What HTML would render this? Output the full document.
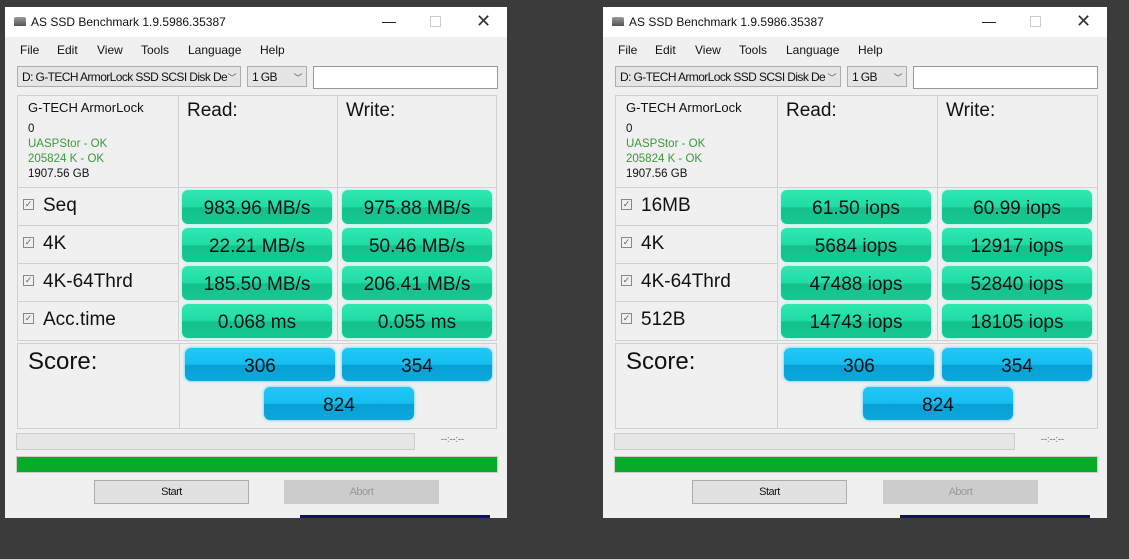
<!DOCTYPE html><html><head><style>
*{margin:0;padding:0;box-sizing:border-box}
body{width:1129px;height:559px;background:#3b3b3b;position:relative;overflow:hidden;font-family:"Liberation Sans",sans-serif;color:#111}
.w{position:absolute;top:7px;width:502px;height:511px;background:#f0f0f0}
.w *{position:absolute}
.tb{left:0;top:0;width:100%;height:30px;background:#fff}
.tt{left:26px;top:8px;font-size:12px}
.ic{left:9px;top:10px;width:12px;height:9px;background:linear-gradient(#999,#555);border-radius:2px 2px 0 0}
.mn{top:36px;font-size:12px}
.cb{top:59px;height:21px;border:1px solid #adadad;background:#e5e5e5;font-size:12px;padding:3px 4px;letter-spacing:-.6px;white-space:nowrap;overflow:hidden}
.ar{font-size:9px;color:#555}
.cell{border:1px solid #d0d0d0;background:#f0f0f0}
.hd{font-size:19px;top:4px;left:8px}
.lb{font-size:19px;left:25px;top:7px}
.ck{left:5px;top:11px;width:11px;height:11px;border:1px solid #888;font-size:9px;line-height:9px;text-align:center;color:#666}
.g{height:34px;width:150px;border-radius:6px;background:linear-gradient(#2ee8b0 0,#20dca4 50%,#14c08c 52%,#16c890 100%);font-size:19px;text-align:center;line-height:38px;box-shadow:0 0 2px #6fe}
.b{height:33px;width:150px;border-radius:6px;background:linear-gradient(#20c8f8 0,#16bdf0 50%,#08a0d4 52%,#0aa8dc 100%);font-size:19px;text-align:center;line-height:38px;box-shadow:0 0 3px #4cf}
.bt{top:473px;height:24px;width:155px;border:1px solid #adadad;font-size:11px;text-align:center;line-height:22px;letter-spacing:-.5px}
</style></head><body>

<div class="w" style="left:5px">
<div class="tb"></div><div class="ic"></div><div class="tt">AS SSD Benchmark 1.9.5986.35387</div>
<div style="left:377px;top:6px;font-size:14px">—</div><div style="left:425px;top:9px;width:11px;height:11px;border:1px solid #ccc"></div><div style="left:471px;top:4px;font-size:18px;color:#333">✕</div>
<div class="mn" style="left:15px">File</div><div class="mn" style="left:52px">Edit</div><div class="mn" style="left:92px">View</div><div class="mn" style="left:136px">Tools</div><div class="mn" style="left:183px">Language</div><div class="mn" style="left:255px">Help</div>
<div class="cb" style="left:12px;width:224px">D: G-TECH ArmorLock SSD SCSI Disk De <span class="ar" style="right:4px;top:4px">﹀</span></div>
<div class="cb" style="left:242px;width:60px">1 GB<span class="ar" style="right:4px;top:4px">﹀</span></div>
<div style="left:308px;top:59px;width:185px;height:23px;background:#fff;border:1px solid #999"></div>
<div class="cell" style="left:12px;top:88px;width:162px;height:93px"><div style="left:10px;top:4px;font-size:13px">G-TECH ArmorLock</div><div style="left:10px;top:26px;font-size:11.5px;line-height:15px;width:150px">0<br><span style="position:static;color:#3a9a3a">UASPStor - OK<br>205824 K - OK</span><br>1907.56 GB</div></div>
<div class="cell" style="left:173px;top:88px;width:160px;height:93px"><div class="hd">Read:</div></div>
<div class="cell" style="left:332px;top:88px;width:160px;height:93px"><div class="hd">Write:</div></div>
<div class="cell" style="left:12px;top:180px;width:162px;height:39px"><div class="ck">✓</div><div class="lb">Seq</div></div>
<div class="cell" style="left:12px;top:218px;width:162px;height:39px"><div class="ck">✓</div><div class="lb">4K</div></div>
<div class="cell" style="left:12px;top:256px;width:162px;height:39px"><div class="ck">✓</div><div class="lb">4K-64Thrd</div></div>
<div class="cell" style="left:12px;top:294px;width:162px;height:40px"><div class="ck">✓</div><div class="lb">Acc.time</div></div>
<div class="cell" style="left:173px;top:180px;width:160px;height:154px"></div><div class="cell" style="left:332px;top:180px;width:160px;height:154px"></div>
<div class="g" style="left:177px;top:183px">983.96 MB/s</div><div class="g" style="left:337px;top:183px">975.88 MB/s</div>
<div class="g" style="left:177px;top:221px">22.21 MB/s</div><div class="g" style="left:337px;top:221px">50.46 MB/s</div>
<div class="g" style="left:177px;top:259px">185.50 MB/s</div><div class="g" style="left:337px;top:259px">206.41 MB/s</div>
<div class="g" style="left:177px;top:297px">0.068 ms</div><div class="g" style="left:337px;top:297px">0.055 ms</div>
<div class="cell" style="left:12px;top:336px;width:163px;height:86px"><div style="left:10px;top:4px;font-size:24px">Score:</div></div>
<div class="cell" style="left:174px;top:336px;width:318px;height:86px"></div>
<div class="b" style="left:180px;top:341px">306</div><div class="b" style="left:337px;top:341px">354</div><div class="b" style="left:259px;top:380px">824</div>
<div style="left:11px;top:426px;width:399px;height:17px;background:#e6e6e6;border:1px solid #ccc"></div>
<div style="left:436px;top:427px;font-size:9px;color:#555">--:--:--</div>
<div style="left:11px;top:449px;width:482px;height:17px;background:#07ab27;border:1px solid #ccc"></div>
<div class="bt" style="left:89px;background:#e1e1e1">Start</div>
<div class="bt" style="left:279px;background:#ccc;color:#999;border-color:#ccc">Abort</div>
<div style="left:295px;top:508px;width:190px;height:3px;background:#11116a"></div>
</div>

<div class="w" style="left:603px;width:504px">
<div class="tb"></div><div class="ic"></div><div class="tt">AS SSD Benchmark 1.9.5986.35387</div>
<div style="left:379px;top:6px;font-size:14px">—</div><div style="left:427px;top:9px;width:11px;height:11px;border:1px solid #ccc"></div><div style="left:473px;top:4px;font-size:18px;color:#333">✕</div>
<div class="mn" style="left:15px">File</div><div class="mn" style="left:52px">Edit</div><div class="mn" style="left:92px">View</div><div class="mn" style="left:136px">Tools</div><div class="mn" style="left:183px">Language</div><div class="mn" style="left:255px">Help</div>
<div class="cb" style="left:12px;width:226px">D: G-TECH ArmorLock SSD SCSI Disk De <span class="ar" style="right:4px;top:4px">﹀</span></div>
<div class="cb" style="left:244px;width:60px">1 GB<span class="ar" style="right:4px;top:4px">﹀</span></div>
<div style="left:310px;top:59px;width:185px;height:23px;background:#fff;border:1px solid #999"></div>
<div class="cell" style="left:12px;top:88px;width:163px;height:93px"><div style="left:10px;top:4px;font-size:13px">G-TECH ArmorLock</div><div style="left:10px;top:26px;font-size:11.5px;line-height:15px;width:150px">0<br><span style="position:static;color:#3a9a3a">UASPStor - OK<br>205824 K - OK</span><br>1907.56 GB</div></div>
<div class="cell" style="left:174px;top:88px;width:161px;height:93px"><div class="hd">Read:</div></div>
<div class="cell" style="left:334px;top:88px;width:161px;height:93px"><div class="hd">Write:</div></div>
<div class="cell" style="left:12px;top:180px;width:163px;height:39px"><div class="ck">✓</div><div class="lb">16MB</div></div>
<div class="cell" style="left:12px;top:218px;width:163px;height:39px"><div class="ck">✓</div><div class="lb">4K</div></div>
<div class="cell" style="left:12px;top:256px;width:163px;height:39px"><div class="ck">✓</div><div class="lb">4K-64Thrd</div></div>
<div class="cell" style="left:12px;top:294px;width:163px;height:40px"><div class="ck">✓</div><div class="lb">512B</div></div>
<div class="cell" style="left:174px;top:180px;width:161px;height:154px"></div><div class="cell" style="left:334px;top:180px;width:161px;height:154px"></div>
<div class="g" style="left:178px;top:183px">61.50 iops</div><div class="g" style="left:339px;top:183px">60.99 iops</div>
<div class="g" style="left:178px;top:221px">5684 iops</div><div class="g" style="left:339px;top:221px">12917 iops</div>
<div class="g" style="left:178px;top:259px">47488 iops</div><div class="g" style="left:339px;top:259px">52840 iops</div>
<div class="g" style="left:178px;top:297px">14743 iops</div><div class="g" style="left:339px;top:297px">18105 iops</div>
<div class="cell" style="left:12px;top:336px;width:163px;height:86px"><div style="left:10px;top:4px;font-size:24px">Score:</div></div>
<div class="cell" style="left:174px;top:336px;width:321px;height:86px"></div>
<div class="b" style="left:181px;top:341px">306</div><div class="b" style="left:339px;top:341px">354</div><div class="b" style="left:260px;top:380px">824</div>
<div style="left:11px;top:426px;width:401px;height:17px;background:#e6e6e6;border:1px solid #ccc"></div>
<div style="left:438px;top:427px;font-size:9px;color:#555">--:--:--</div>
<div style="left:11px;top:449px;width:484px;height:17px;background:#07ab27;border:1px solid #ccc"></div>
<div class="bt" style="left:89px;background:#e1e1e1">Start</div>
<div class="bt" style="left:280px;background:#ccc;color:#999;border-color:#ccc">Abort</div>
<div style="left:297px;top:508px;width:190px;height:3px;background:#11116a"></div>
</div>
</body></html>
